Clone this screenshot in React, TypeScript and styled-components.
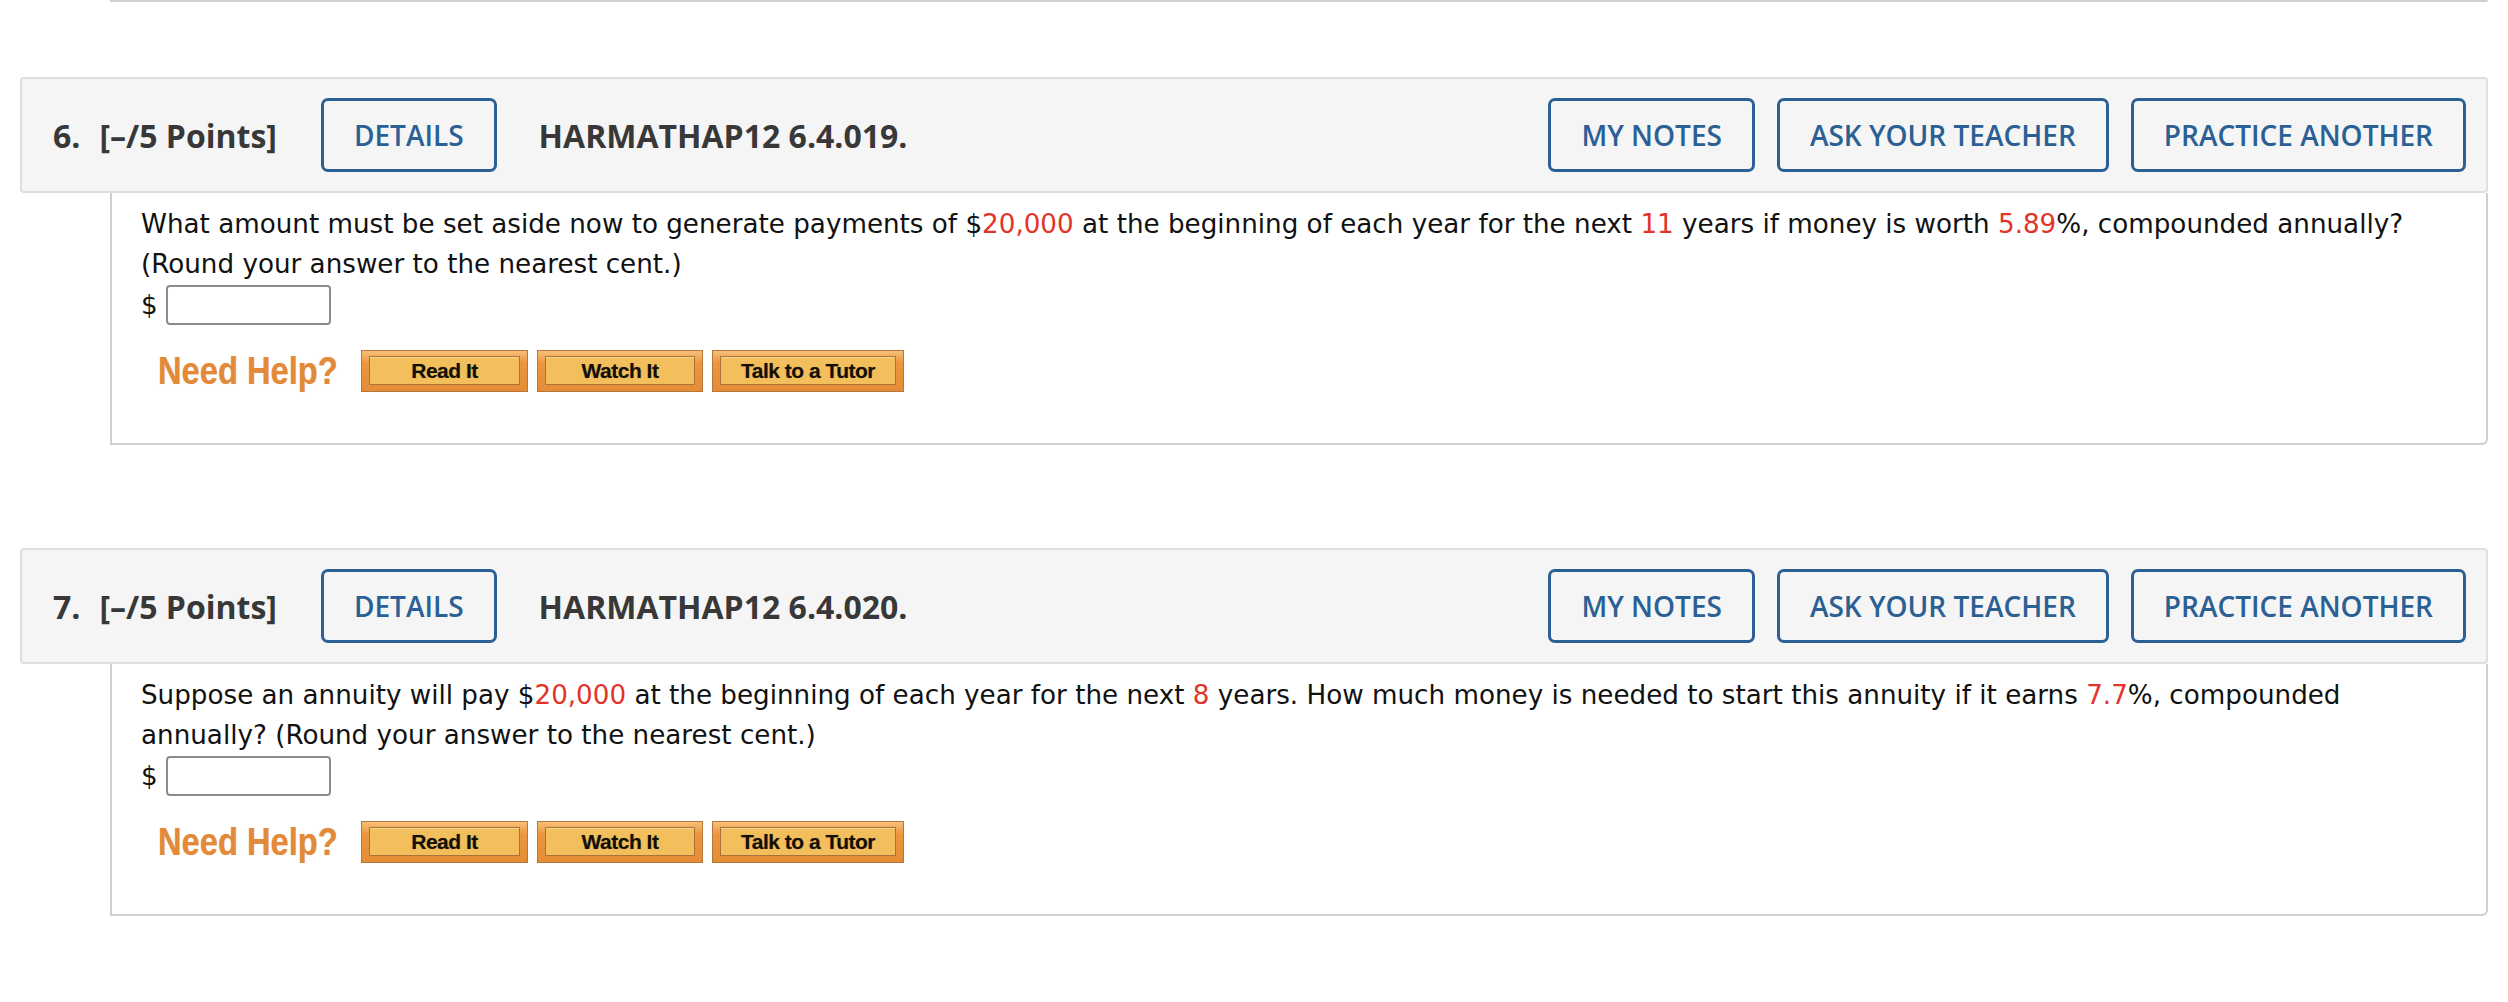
import React from 'react';
import styled, { createGlobalStyle } from 'styled-components';

type Part = string | { red: string };

interface QuestionData {
  number: number;
  points: string;
  code: string;
  text: Part[];
}

const questions: QuestionData[] = [
  {
    number: 6,
    points: '[–/5 Points]',
    code: 'HARMATHAP12 6.4.019.',
    text: [
      'What amount must be set aside now to generate payments of $',
      { red: '20,000' },
      ' at the beginning of each year for the next ',
      { red: '11' },
      ' years if money is worth ',
      { red: '5.89' },
      '%, compounded annually? (Round your answer to the nearest cent.)',
    ],
  },
  {
    number: 7,
    points: '[–/5 Points]',
    code: 'HARMATHAP12 6.4.020.',
    text: [
      'Suppose an annuity will pay $',
      { red: '20,000' },
      ' at the beginning of each year for the next ',
      { red: '8' },
      ' years. How much money is needed to start this annuity if it earns ',
      { red: '7.7' },
      '%, compounded annually? (Round your answer to the nearest cent.)',
    ],
  },
];

const helpLinks = [
  { label: 'Read It', width: 167 },
  { label: 'Watch It', width: 166 },
  { label: 'Talk to a Tutor', width: 192 },
];

const GlobalStyle = createGlobalStyle`
  html, body {
    margin: 0;
    padding: 0;
    background: #fff;
  }
`;

const Page = styled.div`
  padding: 0 20px 40px;
`;

const PrevBottom = styled.div`
  margin-left: 90px;
  border-bottom: 2px solid #cfcfcf;
  border-radius: 0 0 6px 0;
`;

const Question = styled.section`
  margin-top: 75px;

  & + & {
    margin-top: 103px;
  }
`;

const Header = styled.div`
  display: flex;
  align-items: center;
  box-sizing: border-box;
  height: 116px;
  padding: 0 20px 0 31px;
  background: #f5f5f5;
  border: 2px solid #dedede;
  border-radius: 4px;
  font-family: 'Open Sans', 'Liberation Sans', sans-serif;
  color: #383838;
`;

const Number = styled.span`
  font-size: 32px;
  font-weight: 700;
  margin-right: 19px;
`;

const Points = styled.span`
  font-size: 32px;
  font-weight: 700;
  margin-right: 44px;
`;

const Code = styled.span`
  font-size: 32px;
  font-weight: 700;
  margin-left: 42px;
`;

const Actions = styled.div`
  display: flex;
  gap: 22px;
  margin-left: auto;
`;

const OutlineButton = styled.button`
  box-sizing: border-box;
  height: 74px;
  padding: 0 30px;
  background: transparent;
  border: 3px solid #2b6094;
  border-radius: 7px;
  color: #2b6094;
  font-family: 'Open Sans', 'Liberation Sans', sans-serif;
  font-size: 28px;
  font-weight: 600;
  text-transform: uppercase;
  cursor: pointer;
`;

const Body = styled.div`
  margin-left: 90px;
  padding: 11px 29px 51px;
  border: 2px solid #cfcfcf;
  border-top: none;
  border-radius: 0 0 6px 0;
  font-family: 'DejaVu Sans', Verdana, sans-serif;
  font-size: 26.2px;
  line-height: 40px;
  color: #111;
`;

const Red = styled.span`
  color: #e3342a;
`;

const AnswerRow = styled.div`
  display: flex;
  align-items: center;
  gap: 8px;
  margin-top: 1px;
  height: 40px;
`;

const AnswerInput = styled.input`
  box-sizing: border-box;
  width: 165px;
  height: 40px;
  border: 2px solid #8c8c8c;
  border-radius: 4px;
`;

const HelpRow = styled.div`
  display: flex;
  align-items: center;
  gap: 9px;
  margin-top: 25px;
  height: 42px;
`;

const NeedHelp = styled.span`
  display: inline-block;
  width: 183px;
  margin: 0 11px 0 17px;
  white-space: nowrap;
  font-family: 'Liberation Sans', Arial, sans-serif;
  font-size: 38px;
  font-weight: 700;
  color: #e2893a;
  text-shadow: 0 0 1px rgba(226, 137, 58, 0.6);
  transform: scaleX(0.86);
  transform-origin: left center;
`;

const HelpButton = styled.button<{ $width: number }>`
  display: flex;
  box-sizing: border-box;
  width: ${(p) => p.$width}px;
  height: 42px;
  padding: 5px 7px 6px;
  border: 1px solid #b7773a;
  background: linear-gradient(#f7c07a, #eb963f 30%, #e58c36);
  cursor: pointer;
`;

const HelpInner = styled.span`
  flex: 1;
  display: flex;
  align-items: center;
  justify-content: center;
  background: #f3bf5c;
  border: 1px solid #a9733a;
  box-shadow: inset 0 1px 0 #f9d68e;
  font-family: 'Liberation Sans', Arial, sans-serif;
  font-size: 21px;
  font-weight: 700;
  letter-spacing: -0.5px;
  color: #141008;
  text-shadow: 0 0 1px rgba(0, 0, 0, 0.35);
`;

const QuestionBlock = ({ q }: { q: QuestionData }) => (
  <Question>
    <Header>
      <Number>{q.number}.</Number>
      <Points>{q.points}</Points>
      <OutlineButton>Details</OutlineButton>
      <Code>{q.code}</Code>
      <Actions>
        <OutlineButton>My Notes</OutlineButton>
        <OutlineButton>Ask Your Teacher</OutlineButton>
        <OutlineButton>Practice Another</OutlineButton>
      </Actions>
    </Header>
    <Body>
      <div>
        {q.text.map((part, i) =>
          typeof part === 'string' ? part : <Red key={i}>{part.red}</Red>
        )}
      </div>
      <AnswerRow>
        $<AnswerInput type="text" />
      </AnswerRow>
      <HelpRow>
        <NeedHelp>Need Help?</NeedHelp>
        {helpLinks.map((link) => (
          <HelpButton key={link.label} $width={link.width}>
            <HelpInner>{link.label}</HelpInner>
          </HelpButton>
        ))}
      </HelpRow>
    </Body>
  </Question>
);

export default function App() {
  return (
    <Page>
      <GlobalStyle />
      <PrevBottom />
      {questions.map((q) => (
        <QuestionBlock key={q.number} q={q} />
      ))}
    </Page>
  );
}
